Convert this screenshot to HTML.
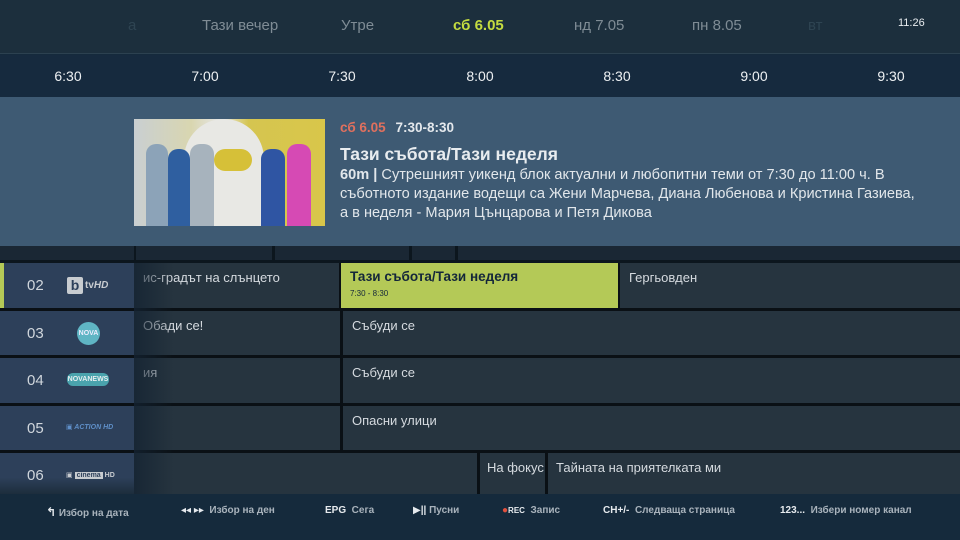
<!DOCTYPE html>
<html><head><meta charset="utf-8"><style>
*{margin:0;padding:0;box-sizing:border-box}
body{width:960px;height:540px;overflow:hidden;background:#152a3c;font-family:"Liberation Sans","DejaVu Sans",sans-serif;position:relative;color:#d8dde2}
.a{position:absolute}
.top{left:0;top:0;width:960px;height:54px;background:#1c2f3d;border-bottom:1px solid #2c4150}
.top span{position:absolute;top:17px;font-size:15px;color:#7f8c95}
.times{left:0;top:55px;width:960px;height:42px;background:#162a3e}
.times span{position:absolute;top:13px;font-size:14px;color:#eef1f3;transform:translateX(-50%)}
.det{left:0;top:97px;width:960px;height:149px;background:#3e5a73}
.strip{left:0;top:246px;width:960px;height:17px;background:#0c161e}
.cell{position:absolute;background:#26343f;color:#d5dadf;font-size:13px;padding:7px 9px;white-space:nowrap;overflow:hidden}
.ch{position:absolute;left:0;width:134px;background:#2d405a}
.ch .n{position:absolute;left:27px;top:14px;font-size:15px;color:#d0d6dc}
.ft span{position:absolute;top:505px;font-size:10px;color:#a9b3bc;font-weight:bold}
.ft b{color:#e6eaee}
</style></head><body>
<div class="a top">
<span style="left:128px;color:#2e4452">а</span>
<span style="left:202px">Тази вечер</span>
<span style="left:341px">Утре</span>
<span style="left:453px;color:#c4dc40;font-weight:bold">сб 6.05</span>
<span style="left:574px">нд 7.05</span>
<span style="left:692px">пн 8.05</span>
<span style="left:808px;color:#2e4452">вт</span>
<span style="left:898px;top:17px;font-size:11px;color:#e8ecef">11:26</span>
</div>
<div class="a times">
<span style="left:68px">6:30</span><span style="left:205px">7:00</span><span style="left:342px">7:30</span><span style="left:480px">8:00</span><span style="left:617px">8:30</span><span style="left:754px">9:00</span><span style="left:891px">9:30</span>
</div>
<div class="a det">
<div class="a" style="left:134px;top:22px;width:191px;height:107px;background:linear-gradient(90deg,#c9cfd2 0%,#d9d6b0 30%,#e6e6e6 45%,#d5c550 60%,#d9c64a 100%);overflow:hidden">
<div class="a" style="left:50px;top:0;width:80px;height:107px;background:#e8e8e4;border-radius:40px 40px 0 0"></div>
<div class="a" style="left:80px;top:30px;width:38px;height:22px;background:#d6c038;border-radius:11px"></div>
<div class="a" style="left:12px;top:25px;width:22px;height:82px;background:#8ca3b8;border-radius:10px 10px 0 0"></div>
<div class="a" style="left:34px;top:30px;width:22px;height:77px;background:#2f5fa0;border-radius:10px 10px 0 0"></div>
<div class="a" style="left:56px;top:25px;width:24px;height:82px;background:#a7b3bd;border-radius:10px 10px 0 0"></div>
<div class="a" style="left:127px;top:30px;width:24px;height:77px;background:#2f55a3;border-radius:10px 10px 0 0"></div>
<div class="a" style="left:153px;top:25px;width:24px;height:82px;background:#d64ab4;border-radius:10px 10px 0 0"></div>
</div>
<div class="a" style="left:340px;top:23px;font-size:13.5px;font-weight:bold;color:#e0705e">сб 6.05 <span style="color:#e4e8ec;margin-left:6px">7:30-8:30</span></div>
<div class="a" style="left:340px;top:47px;font-size:17.5px;font-weight:bold;color:#e8ecef">Тази събота/Тази неделя</div>
<div class="a" style="left:340px;top:69px;width:620px;font-size:14.6px;line-height:19px;color:#e2e7eb;white-space:nowrap"><b>60m |</b> Сутрешният уикенд блок актуални и любопитни теми от 7:30 до 11:00 ч. В<br>съботното издание водещи са Жени Марчева, Диана Любенова и Кристина Газиева,<br>а в неделя - Мария Цънцарова и Петя Дикова</div>
</div>
<div class="a strip">
<div class="cell" style="left:0;top:0;width:134px;height:14px;background:#1a2734"></div>
<div class="cell" style="left:136px;top:0;width:136px;height:14px;background:#1a2734"></div>
<div class="cell" style="left:275px;top:0;width:134px;height:14px;background:#1a2734"></div>
<div class="cell" style="left:412px;top:0;width:43px;height:14px;background:#1a2734"></div>
<div class="cell" style="left:458px;top:0;width:502px;height:14px;background:#1a2734"></div>
</div>
<div class="a" style="left:0;top:263px;width:960px;height:232px;background:#0a1015"></div>
<div class="cell" style="left:134px;top:263px;width:205px;height:45px">ис-градът на слънцето</div>
<div class="cell" style="left:341px;top:263px;width:277px;height:45px;background:#b4c957;color:#14263a;font-weight:bold;font-size:13.5px;padding:6px 9px">Тази събота/Тази неделя<div style="font-size:8px;font-weight:normal;margin-top:5px">7:30 - 8:30</div></div>
<div class="cell" style="left:620px;top:263px;width:340px;height:45px">Гергьовден</div>
<div class="cell" style="left:134px;top:311px;width:206px;height:44px">Обади се!</div>
<div class="cell" style="left:343px;top:311px;width:617px;height:44px">Събуди се</div>
<div class="cell" style="left:134px;top:358px;width:206px;height:45px">ия</div>
<div class="cell" style="left:343px;top:358px;width:617px;height:45px">Събуди се</div>
<div class="cell" style="left:134px;top:406px;width:206px;height:44px"></div>
<div class="cell" style="left:343px;top:406px;width:617px;height:44px">Опасни улици</div>
<div class="cell" style="left:134px;top:453px;width:343px;height:41px"></div>
<div class="cell" style="left:480px;top:453px;width:65px;height:41px;padding-left:7px">На фокус</div>
<div class="cell" style="left:548px;top:453px;width:412px;height:41px;padding-left:8px">Тайната на приятелката ми</div>
<div class="a" style="left:134px;top:263px;width:40px;height:232px;background:linear-gradient(90deg,rgba(20,35,50,.8),rgba(20,35,50,0))"></div>
<div class="ch" style="top:263px;height:45px"><div class="a" style="left:0;top:0;width:4px;height:45px;background:#b4c957"></div><span class="n">02</span>
<div class="a" style="left:67px;top:14px;width:16px;height:17px;background:#c8ccd0;border-radius:2px;color:#2d405a;font-size:14px;font-weight:bold;line-height:17px;text-align:center">b</div><span class="a" style="left:85px;top:17px;font-size:10px;font-weight:bold;color:#c8ccd0">tv<i>HD</i></span></div>
<div class="ch" style="top:311px;height:44px"><span class="n">03</span><div class="a" style="left:77px;top:11px;width:23px;height:23px;border-radius:50%;background:#5fb5c4;color:#eef;font-size:7px;font-weight:bold;line-height:23px;text-align:center">NOVA</div></div>
<div class="ch" style="top:358px;height:45px"><span class="n">04</span><div class="a" style="left:67px;top:15px;width:42px;height:13px;background:#4aa3ad;border-radius:6px;color:#e6eef0;font-size:7px;font-weight:bold;line-height:13px;text-align:center">NOVANEWS</div></div>
<div class="ch" style="top:406px;height:44px"><span class="n">05</span><span class="a" style="left:66px;top:17px;font-size:7px;font-weight:bold;font-style:italic;color:#5f8fc8">▣ ACTION HD</span></div>
<div class="ch" style="top:453px;height:41px;background:linear-gradient(#2d405a 60%,#1d2d3c)"><span class="n">06</span><span class="a" style="left:66px;top:18px;font-size:7px;font-weight:bold;color:#c8ccd0">▣ <span style="background:#c8ccd0;color:#2d405a;padding:0 2px">cinema</span> HD</span></div>
<div class="a" style="left:0;top:494px;width:960px;height:46px;background:#152a3c"></div>
<div class="ft">
<span style="left:46px"><b style="font-size:12px">↰</b> Избор на дата</span>
<span style="left:181px"><b>◂◂ ▸▸</b>&nbsp; Избор на ден</span>
<span style="left:325px"><b>EPG</b>&nbsp; Сега</span>
<span style="left:413px"><b>▶||</b> Пусни</span>
<span style="left:502px"><b style="color:#e0503e">●</b><b style="font-size:8px">REC</b>&nbsp; Запис</span>
<span style="left:603px"><b>CH+/-</b>&nbsp; Следваща страница</span>
<span style="left:780px"><b>123...</b>&nbsp; Избери номер канал</span>
</div>
</body></html>
